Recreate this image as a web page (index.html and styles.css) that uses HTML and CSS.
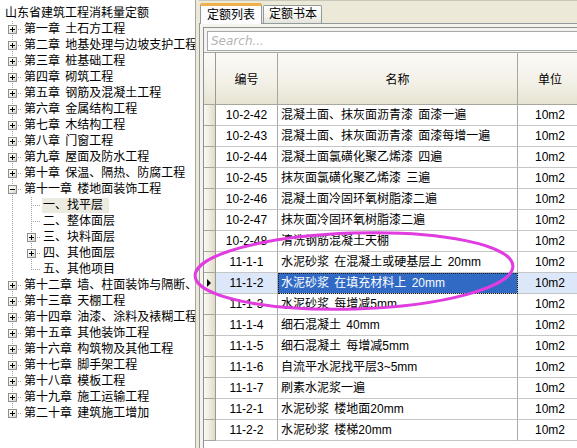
FILE: index.html
```html
<!DOCTYPE html>
<html lang="zh-CN">
<head>
<meta charset="utf-8">
<title>定额列表</title>
<link rel="stylesheet" href="styles.css">
</head>
<body>
<div class="app">
  <div class="tree">
    <div class="tree-title">山东省建筑工程消耗量定额</div>
    <ul class="nodes">
      <li class="node"><span class="exp plus"></span><span class="label">第一章 土石方工程</span></li>
      <li class="node"><span class="exp plus"></span><span class="label">第二章 地基处理与边坡支护工程</span></li>
      <li class="node"><span class="exp plus"></span><span class="label">第三章 桩基础工程</span></li>
      <li class="node"><span class="exp plus"></span><span class="label">第四章 砌筑工程</span></li>
      <li class="node"><span class="exp plus"></span><span class="label">第五章 钢筋及混凝土工程</span></li>
      <li class="node"><span class="exp plus"></span><span class="label">第六章 金属结构工程</span></li>
      <li class="node"><span class="exp plus"></span><span class="label">第七章 木结构工程</span></li>
      <li class="node"><span class="exp plus"></span><span class="label">第八章 门窗工程</span></li>
      <li class="node"><span class="exp plus"></span><span class="label">第九章 屋面及防水工程</span></li>
      <li class="node"><span class="exp plus"></span><span class="label">第十章 保温、隔热、防腐工程</span></li>
      <li class="node"><span class="exp minus"></span><span class="label">第十一章 楼地面装饰工程</span></li>
      <li class="children">
        <ul class="sub">
          <li class="node child"><span class="spacer"></span><span class="label selected">一、找平层</span></li>
          <li class="node child"><span class="spacer"></span><span class="label">二、整体面层</span></li>
          <li class="node child"><span class="exp plus"></span><span class="label">三、块料面层</span></li>
          <li class="node child"><span class="exp plus"></span><span class="label">四、其他面层</span></li>
          <li class="node child last"><span class="spacer"></span><span class="label">五、其他项目</span></li>
        </ul>
      </li>
      <li class="node"><span class="exp plus"></span><span class="label">第十二章 墙、柱面装饰与隔断、</span></li>
      <li class="node"><span class="exp plus"></span><span class="label">第十三章 天棚工程</span></li>
      <li class="node"><span class="exp plus"></span><span class="label">第十四章 油漆、涂料及裱糊工程</span></li>
      <li class="node"><span class="exp plus"></span><span class="label">第十五章 其他装饰工程</span></li>
      <li class="node"><span class="exp plus"></span><span class="label">第十六章 构筑物及其他工程</span></li>
      <li class="node"><span class="exp plus"></span><span class="label">第十七章 脚手架工程</span></li>
      <li class="node"><span class="exp plus"></span><span class="label">第十八章 模板工程</span></li>
      <li class="node"><span class="exp plus"></span><span class="label">第十九章 施工运输工程</span></li>
      <li class="node last"><span class="exp plus"></span><span class="label">第二十章 建筑施工增加</span></li>
    </ul>
  </div>
  <div class="splitter"></div>
  <div class="main">
    <div class="tabs">
      <div class="tab active">定额列表</div>
      <div class="tab">定额书本</div>
    </div>
    <div class="page">
      <div class="inner">
        <div class="search">Search...</div>
        <div class="grid">
          <table>
            <colgroup>
              <col class="c-sel"><col class="c-code"><col class="c-name"><col class="c-unit">
            </colgroup>
            <thead>
              <tr><th class="rh"></th><th>编号</th><th>名称</th><th>单位</th></tr>
            </thead>
            <tbody>
              <tr><td class="rh"></td><td class="code">10-2-42</td><td class="name">混凝土面、抹灰面沥青漆 面漆一遍</td><td class="unit">10m2</td></tr>
              <tr><td class="rh"></td><td class="code">10-2-43</td><td class="name">混凝土面、抹灰面沥青漆 面漆每增一遍</td><td class="unit">10m2</td></tr>
              <tr><td class="rh"></td><td class="code">10-2-44</td><td class="name">混凝土面氯磺化聚乙烯漆 四遍</td><td class="unit">10m2</td></tr>
              <tr><td class="rh"></td><td class="code">10-2-45</td><td class="name">抹灰面氯磺化聚乙烯漆 三遍</td><td class="unit">10m2</td></tr>
              <tr><td class="rh"></td><td class="code">10-2-46</td><td class="name">混凝土面冷固环氧树脂漆二遍</td><td class="unit">10m2</td></tr>
              <tr><td class="rh"></td><td class="code">10-2-47</td><td class="name">抹灰面冷固环氧树脂漆二遍</td><td class="unit">10m2</td></tr>
              <tr><td class="rh"></td><td class="code">10-2-48</td><td class="name">清洗钢筋混凝土天棚</td><td class="unit">10m2</td></tr>
              <tr><td class="rh"></td><td class="code">11-1-1</td><td class="name">水泥砂浆 在混凝土或硬基层上 20mm</td><td class="unit">10m2</td></tr>
              <tr class="current"><td class="rh"><span class="arrow"></span></td><td class="code">11-1-2</td><td class="name">水泥砂浆 在填充材料上 20mm</td><td class="unit">10m2</td></tr>
              <tr><td class="rh"></td><td class="code">11-1-3</td><td class="name">水泥砂浆 每增减5mm</td><td class="unit">10m2</td></tr>
              <tr><td class="rh"></td><td class="code">11-1-4</td><td class="name">细石混凝土 40mm</td><td class="unit">10m2</td></tr>
              <tr><td class="rh"></td><td class="code">11-1-5</td><td class="name">细石混凝土 每增减5mm</td><td class="unit">10m2</td></tr>
              <tr><td class="rh"></td><td class="code">11-1-6</td><td class="name">自流平水泥找平层3~5mm</td><td class="unit">10m2</td></tr>
              <tr><td class="rh"></td><td class="code">11-1-7</td><td class="name">刷素水泥浆一遍</td><td class="unit">10m2</td></tr>
              <tr><td class="rh"></td><td class="code">11-2-1</td><td class="name">水泥砂浆 楼地面20mm</td><td class="unit">10m2</td></tr>
              <tr><td class="rh"></td><td class="code">11-2-2</td><td class="name">水泥砂浆 楼梯20mm</td><td class="unit">10m2</td></tr>
            </tbody>
          </table>
        </div>
      </div>
    </div>
  </div>
  <svg class="mark" width="577" height="448" viewBox="0 0 577 448" aria-hidden="true">
    <ellipse cx="354" cy="271" rx="159" ry="38" transform="rotate(-1.8 354 271)" fill="none" stroke="#e03ce0" stroke-width="3"/>
  </svg>
</div>
</body>
</html>
```

FILE: styles.css
```css
* { box-sizing: border-box; }
html, body { margin: 0; padding: 0; }
body {
  width: 577px;
  height: 448px;
  overflow: hidden;
  background: #ece9d8;
  font-family: "Liberation Sans", "Noto Sans CJK SC", sans-serif;
  font-size: 12px;
  color: #000;
}
.app {
  position: relative;
  display: flex;
  width: 577px;
  height: 448px;
}

/* ---------- tree ---------- */
.tree {
  width: 196px;
  flex: none;
  height: 100%;
  background: #fff;
  border-right: 1px solid #a7a6a0;
  overflow: hidden;
  padding-top: 5px;
  white-space: nowrap;
  word-spacing: 2px;
}
.tree-title {
  height: 16px;
  line-height: 16px;
  padding-left: 5px;
}
.nodes, .sub {
  list-style: none;
  margin: 0;
  padding: 0;
}
.node {
  height: 16px;
  display: flex;
  align-items: center;
  padding-left: 8px;
  background-image:
    repeating-linear-gradient(to bottom, #a0a0a0 0 1px, transparent 1px 2px),
    repeating-linear-gradient(to right, #a0a0a0 0 1px, transparent 1px 2px);
  background-size: 1px 100%, 10px 1px;
  background-position: 12px 0, 12px 8px;
  background-repeat: no-repeat;
}
.node.last {
  background-size: 1px 8px, 10px 1px;
}
.children {
  background-image: repeating-linear-gradient(to bottom, #a0a0a0 0 1px, transparent 1px 2px);
  background-size: 1px 100%;
  background-position: 12px 0;
  background-repeat: no-repeat;
}
.node.child {
  padding-left: 27px;
  background-position: 31px 0, 31px 8px;
  background-size: 1px 100%, 9px 1px;
}
.node.child.last {
  background-size: 1px 8px, 9px 1px;
}
.exp, .spacer {
  width: 9px;
  height: 9px;
  flex: none;
  position: relative;
}
.exp {
  border: 1px solid #8e8f8f;
  background: linear-gradient(135deg, #ffffff 0%, #f0efe8 50%, #d6d3c4 100%);
}
.exp::before {
  content: "";
  position: absolute;
  left: 1px;
  top: 3px;
  width: 5px;
  height: 1px;
  background: #000;
}
.exp.plus::after {
  content: "";
  position: absolute;
  left: 3px;
  top: 1px;
  width: 1px;
  height: 5px;
  background: #000;
}
.label {
  margin-left: 6px;
  padding: 0 1px;
  height: 15px;
  line-height: 15px;
}
.label.selected {
  background: #ecebe1;
  padding-right: 6px;
}

/* ---------- splitter ---------- */
.splitter {
  width: 3px;
  flex: none;
  background: #ece9d8;
}

/* ---------- main ---------- */
.main {
  flex: 1;
  min-width: 0;
  display: flex;
  flex-direction: column;
  height: 100%;
}
.tabs {
  height: 23px;
  flex: none;
  display: flex;
  align-items: flex-end;
  padding-left: 1px;
  border-top: 1px solid #c9c7ba;
}
.tab {
  height: 18px;
  line-height: 17px;
  padding: 0 4px 0 5px;
  border: 1px solid #919b9c;
  border-bottom: none;
  border-radius: 2px 2px 0 0;
  background: linear-gradient(#ffffff, #f3f3ef 60%, #e3e2da);
  margin-left: 1px;
}
.tab.active {
  height: 21px;
  line-height: 19px;
  margin-left: 0;
  padding: 0 6px 0 6px;
  border-top: 3px solid #f0b04a;
  background: #fcfcfe;
  position: relative;
  z-index: 1;
  margin-bottom: -1px;
}
.page {
  flex: 1;
  min-height: 0;
  border: 1px solid #919b9c;
  border-right: none;
  border-bottom: none;
  background: #f4f3ee;
  padding: 3px 0 0 3px;
  display: flex;
}
.inner {
  flex: 1;
  min-width: 0;
  border: 1px solid #8f8f8f;
  border-right: none;
  border-bottom: none;
  background: #f4f3ee;
  display: flex;
  flex-direction: column;
}
.search {
  margin: 3px 0 0 3px;
  height: 20px;
  flex: none;
  border: 1px solid #a5a9ad;
  border-right: none;
  background: #fff;
  color: #b4b4b4;
  font-style: italic;
  font-family: "DejaVu Sans", "Liberation Sans", sans-serif;
  font-size: 12px;
  line-height: 18px;
  padding-left: 3px;
}
.grid {
  flex: 1;
  margin-top: 1px;
  background: #fff;
  overflow: hidden;
}
table {
  border-collapse: separate;
  border-spacing: 0;
  table-layout: fixed;
  width: 379px;
}
col.c-sel { width: 12px; }
col.c-code { width: 62px; }
col.c-name { width: 240px; }
col.c-unit { width: 65px; }
th {
  height: 53px;
  padding: 0;
  font-weight: normal;
  border-top: 1px solid #a9a79b;
  border-bottom: 1px solid #a9a79b;
  border-right: 1px solid #a9a79b;
  background: linear-gradient(#fbfaf6, #f2f0e6 60%, #e6e3d2);
  text-align: center;
  vertical-align: middle;
}
td {
  height: 21px;
  padding: 0;
  border-bottom: 1px solid #c6c6c6;
  border-right: 1px solid #aaaaaa;
  white-space: nowrap;
  overflow: hidden;
  vertical-align: middle;
  line-height: 19px;
}
.rh {
  background: linear-gradient(to right, #fbfaf6, #ece9dc 60%, #dedbc9);
  border-right: 1px solid #9c9a8e;
  border-bottom: 1px solid #a9a79b;
}
th.rh { background: linear-gradient(#fbfaf6, #f2f0e6 60%, #e6e3d2); }
td.code { text-align: center; }
td.name { padding-left: 3px; word-spacing: 2px; }
td.unit { text-align: center; }
tr.current td.code,
tr.current td.unit { background: #dce7f9; }
tr.current td.name {
  background: #316ac5;
  color: #fff;
  outline: 1px dotted #1a1a1a;
  outline-offset: -1px;
}
.arrow {
  display: block;
  width: 0;
  height: 0;
  margin-left: 3px;
  border-left: 4px solid #000;
  border-top: 4px solid transparent;
  border-bottom: 4px solid transparent;
}

/* ---------- annotation ---------- */
.mark {
  position: absolute;
  left: 0;
  top: 0;
  pointer-events: none;
}
```
